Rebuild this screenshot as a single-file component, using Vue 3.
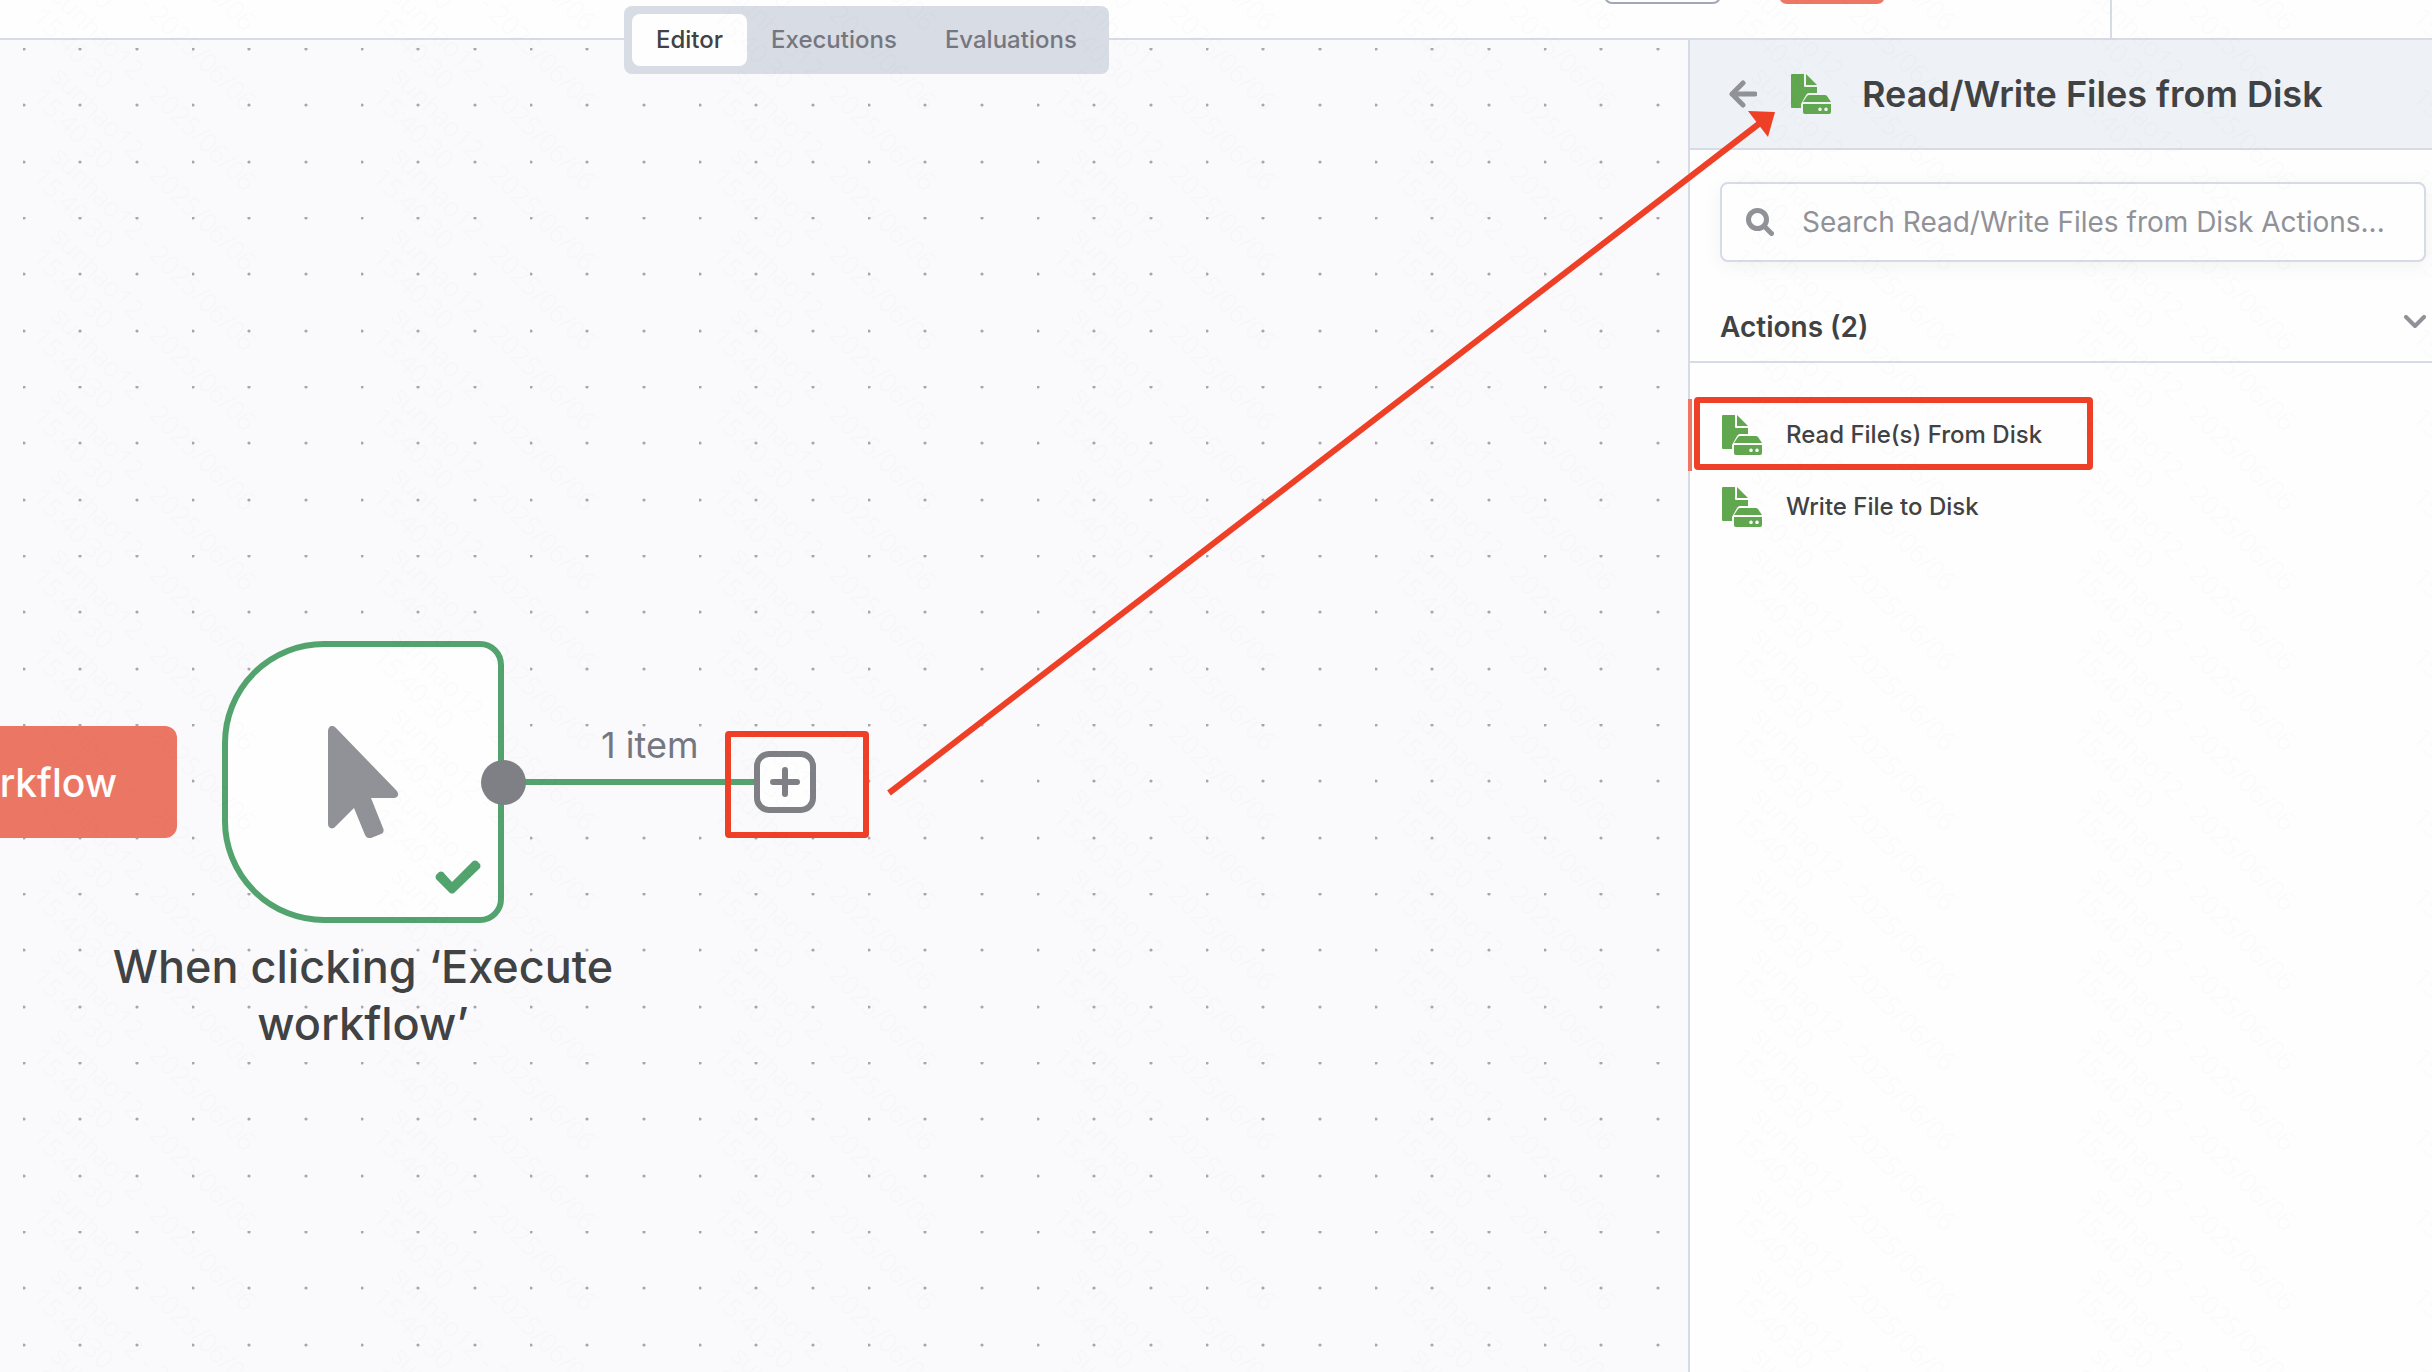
<script setup>
import { ref } from 'vue'

const tabs = ['Editor', 'Executions', 'Evaluations']
const activeTab = ref('Editor')
const actions = ['Read File(s) From Disk', 'Write File to Disk']
const query = ref('')
const dotSteps = [1, 57, 114]
const markRows = [-240, -160, -80, 0, 80]
</script>

<template>
  <div class="app">
    <header class="topbar">
      <button class="top-btn outline" type="button" aria-label="Share"></button>
      <button class="top-btn primary" type="button" aria-label="Save"></button>
      <div class="top-end"></div>
    </header>

    <nav class="tabs" aria-label="Workflow views">
      <button
        v-for="tab in tabs"
        :key="tab"
        type="button"
        class="tab"
        :class="{ active: tab === activeTab }"
        @click="activeTab = tab"
      >{{ tab }}</button>
    </nav>

    <div class="workspace">
      <main class="canvas">
        <svg class="dots" aria-hidden="true">
          <defs>
            <pattern id="dot-grid" x="23" y="8" width="169" height="169" patternUnits="userSpaceOnUse">
              <template v-for="y in dotSteps" :key="y">
                <circle v-for="x in dotSteps" :key="x" :cx="x" :cy="y" r="1.6" fill="#a6a7ab" />
              </template>
            </pattern>
          </defs>
          <rect width="100%" height="100%" fill="url(#dot-grid)" />
        </svg>

        <button class="execute" type="button">rkflow</button>

        <div class="node">
          <svg class="cursor" viewBox="0 0 70 112" aria-hidden="true">
            <path d="M0 5 C0 0 5 -2 8 2 L68 64 C72 68 70 72 65 72 H43 L55 102 Q57 106 53 108 L43 112 Q39 113 37 109 L26 82 L7 101 C4 104 0 102 0 98 Z" />
          </svg>
          <svg class="check" viewBox="0 0 46 34" aria-hidden="true">
            <path d="M1 15 L4 12 Q6 11 8 12 L17 22 L38 1 Q40 0 42 1 L45 4 Q46 6 45 8 L19 33 Q17 34 15 33 L1 19 Q0 17 1 15 Z" />
          </svg>
        </div>
        <div class="node-label">When clicking ‘Execute workflow’</div>

        <div class="edge"></div>
        <div class="port"></div>
        <span class="edge-label">1 item</span>
        <button class="plus" type="button" aria-label="Add node">
          <svg viewBox="0 0 30 30" aria-hidden="true">
            <path d="M15 3V27M3 15H27" />
          </svg>
        </button>
        <div class="callout callout-plus"></div>
      </main>

      <aside class="panel">
        <div class="panel-head">
          <button class="back" type="button" aria-label="Back">
            <svg viewBox="0 0 28 28" aria-hidden="true">
              <path d="M14 3 L3 14 L14 25 M3 14 H26" />
            </svg>
          </button>
          <svg class="file-icon" viewBox="0 0 40 40" aria-hidden="true">
            <use href="#file-drive" />
          </svg>
          <h1>Read/Write Files from Disk</h1>
        </div>

        <label class="search">
          <svg viewBox="0 0 28 28" aria-hidden="true">
            <circle cx="11.5" cy="11.5" r="9" />
            <path d="M18 18 L25.500 25.500" />
          </svg>
          <input
            v-model="query"
            type="text"
            aria-label="Search actions"
            placeholder="Search Read/Write Files from Disk Actions..."
          />
        </label>

        <button class="section" type="button">
          <span>Actions (2)</span>
          <svg viewBox="0 0 22 14" aria-hidden="true"><path d="M2 2 L11 11 L20 2" /></svg>
        </button>

        <ul class="actions">
          <li v-for="(action, i) in actions" :key="action">
            <button class="action" :class="{ current: i === 0 }" type="button">
              <svg class="file-icon" viewBox="0 0 40 40" aria-hidden="true">
                <use href="#file-drive" />
              </svg>
              <span>{{ action }}</span>
            </button>
            <div v-if="i === 0" class="callout callout-action"></div>
          </li>
        </ul>
      </aside>
    </div>

    <svg class="overlay" aria-hidden="true">
      <defs>
        <g id="file-drive">
          <path d="M1 0H13V12Q13 13 14 13H26V19H18Q16 19 15 21L10 30V34H1Q0 34 0 33V1Q0 0 1 0Z" />
          <path d="M15 0L26 11H15Z" />
          <path d="M18 21H34Q35 21 36 22L40 28H12L16 22Q17 21 18 21Z" />
          <path fill-rule="evenodd" d="M12 30H40V38Q40 40 38 40H14Q12 40 12 38ZM29 33.500a1.800 1.800 0 1 0 .01 0ZM35 33.500a1.800 1.800 0 1 0 .01 0Z" />
        </g>
        <pattern id="watermark" width="340" height="80" patternUnits="userSpaceOnUse">
          <g v-for="row in markRows" :key="row" class="mark">
            <text :transform="`translate(50 ${row + 78}) rotate(45)`">sunhao12 - 2025/06/06</text>
            <text :transform="`translate(31 ${row + 99}) rotate(45)`">15:40:30</text>
          </g>
        </pattern>
      </defs>
      <rect width="100%" height="100%" fill="url(#watermark)" />
      <path d="M889 793 L1760 123" stroke="#ee4026" stroke-width="6" />
      <path d="M1748 111 L1775 112 L1768 137 Z" fill="#ee4026" />
    </svg>
  </div>
</template>

<style>
body {
  margin: 0;
}
</style>

<style scoped>
.app {
  position: relative;
  display: flex;
  flex-direction: column;
  min-height: 100vh;
  overflow: hidden;
  background: #fefefe;
  color: #414244;
  font-family: Inter, "Liberation Sans", sans-serif;
}

button {
  margin: 0;
  padding: 0;
  border: 0;
  background: none;
  color: inherit;
  font: inherit;
  cursor: pointer;
}

.topbar {
  display: flex;
  justify-content: flex-end;
  align-items: flex-start;
  box-sizing: border-box;
  height: 40px;
  border-bottom: 2px solid #d7dbe5;
}

.top-btn {
  box-sizing: border-box;
  height: 56px;
  margin-top: -52px;
  border-radius: 8px;
}

.outline {
  width: 117px;
  margin-right: 58px;
  border: 2px solid #a3a8b7;
}

.primary {
  width: 106px;
  margin-right: 225px;
  background: #ee7664;
}

.top-end {
  box-sizing: border-box;
  width: 322px;
  height: 38px;
  border-left: 2px solid #d7dbe5;
}

.tabs {
  position: absolute;
  z-index: 2;
  top: 6px;
  left: 624px;
  display: flex;
  padding: 8px;
  border-radius: 8px;
  background: #d8dce5;
}

.tab {
  height: 52px;
  padding: 0 24px 2px;
  border-radius: 8px;
  color: #757780;
  font-size: 24px;
  font-weight: 500;
}

.tab.active {
  background: #fefefe;
  color: #414244;
}

.workspace {
  display: flex;
  flex: 1;
}

.canvas {
  position: relative;
  flex: 1;
  overflow: hidden;
  background: #fafafc;
}

.dots {
  position: absolute;
  inset: 0;
  width: 100%;
  height: 100%;
}

.execute {
  position: absolute;
  top: 686px;
  left: -20px;
  width: 197px;
  height: 112px;
  padding-right: 60px;
  border-radius: 12px;
  background: #ec7664;
  color: #fefefe;
  font-size: 39px;
  font-weight: 500;
  text-align: right;
  white-space: nowrap;
}

.node {
  position: absolute;
  top: 601px;
  left: 222px;
  box-sizing: border-box;
  width: 282px;
  height: 282px;
  border: 6px solid #52a36d;
  border-radius: 102px 24px 24px 102px;
  background: #fefefe;
}

.cursor {
  position: absolute;
  top: 79px;
  left: 100px;
  width: 70px;
  height: 112px;
  fill: #909298;
}

.check {
  position: absolute;
  right: 17px;
  bottom: 23px;
  width: 46px;
  height: 34px;
  fill: #52a36d;
}

.node-label {
  position: absolute;
  top: 898px;
  left: 103px;
  width: 520px;
  font-size: 45px;
  font-weight: 500;
  line-height: 57px;
  text-align: center;
}

.edge {
  position: absolute;
  top: 739px;
  left: 504px;
  width: 252px;
  height: 6px;
  background: #52a36d;
}

.port {
  position: absolute;
  top: 720px;
  left: 481px;
  width: 45px;
  height: 45px;
  border-radius: 50%;
  background: #7f8085;
}

.edge-label {
  position: absolute;
  top: 683px;
  left: 601px;
  color: #757780;
  font-size: 36px;
  line-height: 44px;
}

.plus {
  position: absolute;
  top: 711px;
  left: 754px;
  display: grid;
  place-items: center;
  box-sizing: border-box;
  width: 62px;
  height: 62px;
  border: 6px solid #7f8085;
  border-radius: 15px;
  background: #fefefe;
}

.plus svg {
  width: 30px;
  height: 30px;
  stroke: #7f8085;
  stroke-width: 6;
  stroke-linecap: round;
}

.callout {
  position: absolute;
  box-sizing: border-box;
  border: 6px solid #ee4026;
  border-radius: 4px;
  pointer-events: none;
}

.callout-plus {
  top: 691px;
  left: 725px;
  width: 144px;
  height: 107px;
}

.callout-action {
  top: -2px;
  left: 4px;
  width: 399px;
  height: 73px;
}

.panel {
  box-sizing: border-box;
  width: 744px;
  border-left: 2px solid #d7dbe5;
}

.panel-head {
  display: flex;
  align-items: center;
  box-sizing: border-box;
  height: 110px;
  padding-left: 39px;
  border-bottom: 2px solid #d7dbe5;
  background: #eef1f6;
}

.back {
  display: flex;
  margin-right: 34px;
}

.back svg {
  width: 28px;
  height: 28px;
  fill: none;
  stroke: #909298;
  stroke-width: 5;
  stroke-linecap: round;
  stroke-linejoin: round;
}

.file-icon {
  flex: none;
  width: 40px;
  height: 40px;
  fill: #60a750;
}

h1 {
  margin: 0 0 0 31px;
  font-size: 36px;
  font-weight: 600;
  line-height: 44px;
}

.search {
  display: flex;
  align-items: center;
  box-sizing: border-box;
  height: 80px;
  margin: 32px 6px 0 30px;
  padding: 0 24px;
  border: 2px solid #d7dbe8;
  border-radius: 8px;
  background: #fefefe;
  box-shadow: 0 4px 20px rgba(0, 0, 0, 0.05);
}

.search svg {
  flex: none;
  width: 28px;
  height: 28px;
  margin-right: 28px;
  fill: none;
  stroke: #909298;
  stroke-width: 5;
  stroke-linecap: round;
}

.search input {
  flex: 1;
  min-width: 0;
  padding: 0;
  border: 0;
  outline: 0;
  background: none;
  color: #414244;
  font: 400 28px Inter, "Liberation Sans", sans-serif;
}

.search input::placeholder {
  color: #909298;
  opacity: 1;
}

.section {
  display: flex;
  justify-content: space-between;
  align-items: center;
  box-sizing: border-box;
  width: 100%;
  height: 101px;
  padding: 30px 6px 0 30px;
  border-bottom: 2px solid #d7dbe5;
  font-size: 28px;
  font-weight: 600;
}

.section svg {
  width: 22px;
  height: 14px;
  margin-bottom: 10px;
  fill: none;
  stroke: #909298;
  stroke-width: 4;
  stroke-linecap: round;
  stroke-linejoin: round;
}

.actions {
  margin: 36px 0 0;
  padding: 0;
  list-style: none;
}

.actions li {
  position: relative;
}

.action {
  position: relative;
  display: flex;
  align-items: center;
  gap: 24px;
  width: 100%;
  height: 72px;
  padding-left: 32px;
  font-size: 24px;
  font-weight: 500;
}

.action span {
  padding-bottom: 2px;
}

.action.current::before {
  content: "";
  position: absolute;
  top: 0;
  left: -2px;
  width: 4px;
  height: 72px;
  background: #ee7664;
}

.overlay {
  position: absolute;
  z-index: 3;
  inset: 0;
  width: 100%;
  height: 100%;
  pointer-events: none;
}

.mark {
  fill: #000000;
  fill-opacity: 0.015;
  font-family: "Open Sans", "Noto Sans", sans-serif;
  font-size: 26px;
  font-weight: 300;
}
</style>
